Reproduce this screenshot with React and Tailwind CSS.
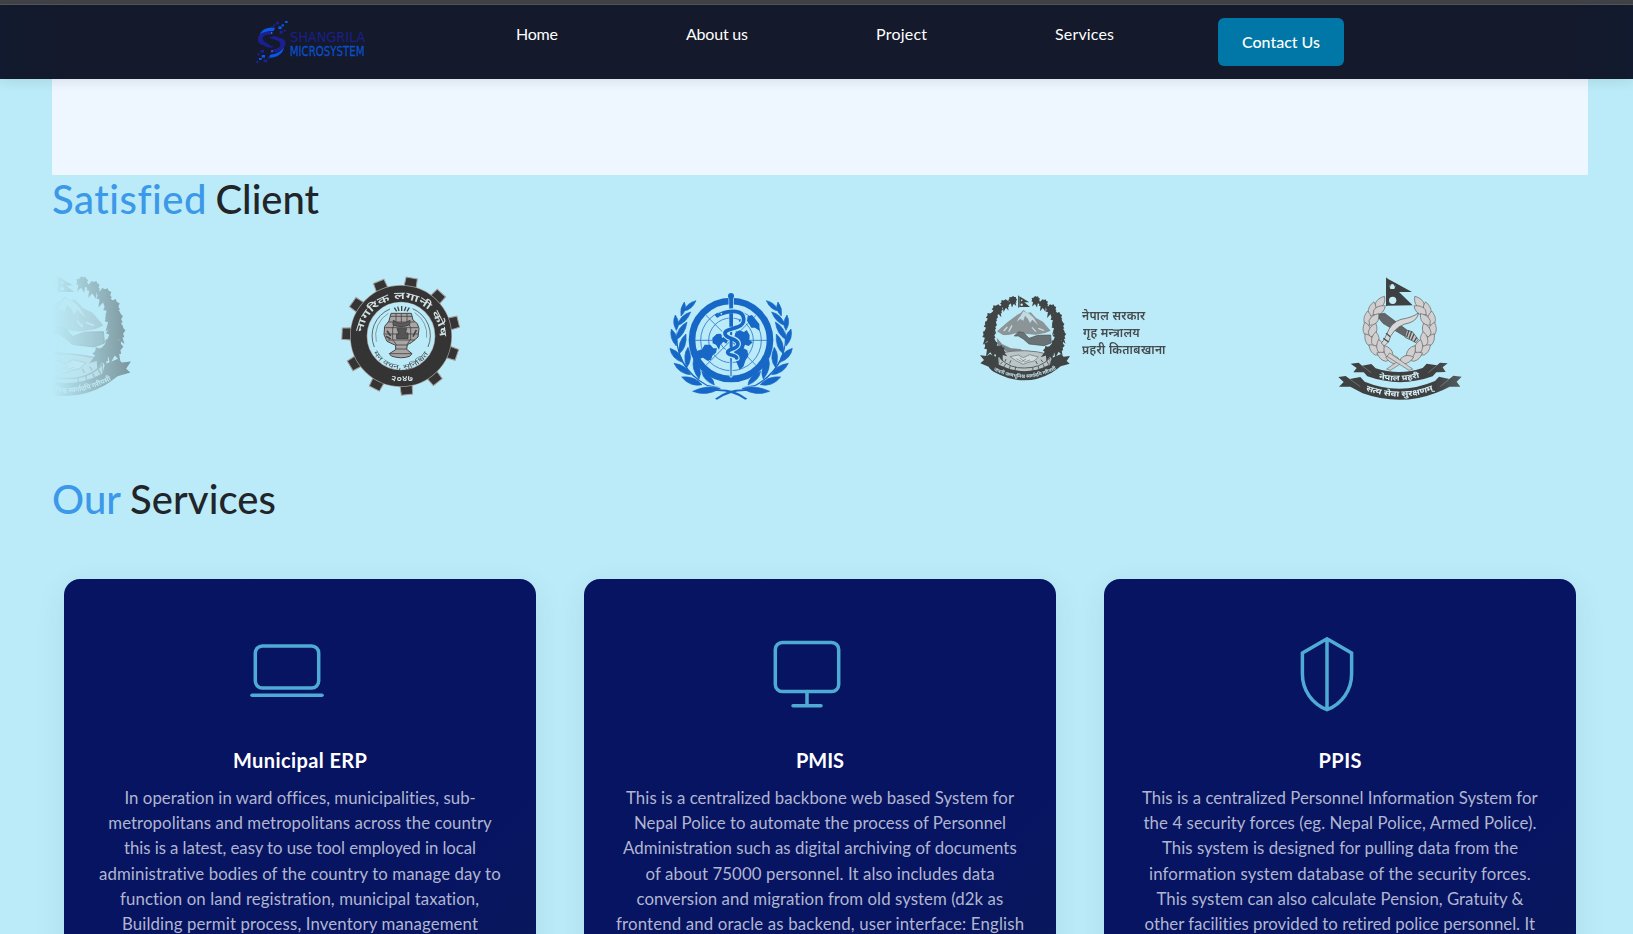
import { useLayoutEffect, useRef, useState } from "react";

/* A single line of text, tracked so that it spans the given width. */
function Line({ w, className = "", children }) {
  const ref = useRef(null);
  const [gap, setGap] = useState(0);
  useLayoutEffect(() => {
    const natural = ref.current.getBoundingClientRect().width;
    setGap((w - natural) / Math.max(1, String(children).length - 1));
  }, []);
  return (
    <span className={`block whitespace-nowrap ${className}`} style={{ width: w }}>
      <span ref={ref} className="inline-block" style={{ letterSpacing: gap }}>
        {children}
      </span>
    </span>
  );
}

const deva = "'Noto Sans Devanagari', 'Noto Sans', sans-serif";

function BrandLogo() {
  return (
    <svg className="block h-[45px] w-[112px] overflow-visible" viewBox="75 60 336 135">
      <g fill="#0a58e8">
        <path d="M88 111C90 91 108 80 135 83L131 93C112 92 98 100 88 111Z" />
        <path d="M162 141C160 161 143 173 114 174L121 164C139 162 151 156 162 141Z" />
        <rect x="145" y="79" width="10" height="8" />
        <rect x="165" y="63" width="8" height="6" />
        <rect x="155" y="73" width="7" height="6" />
        <rect x="95" y="165" width="10" height="8" />
        <rect x="87" y="174" width="8" height="6" />
      </g>
      <g fill="#1b2090">
        <path d="M84 122C81 104 99 92 128 94L122 104C106 103 96 109 98 117C101 126 112 130 124 138C108 137 86 136 84 122Z" />
        <path d="M166 126C169 145 151 157 120 159L127 149C143 147 153 141 151 132C149 122 134 120 114 112C137 111 162 110 166 126Z" />
        <path d="M96 118C102 132 116 139 133 140C118 149 96 140 96 118Z" />
        <path d="M154 130C147 119 135 113 119 112C134 104 153 112 154 130Z" />
        <rect x="138" y="65" width="9" height="8" />
        <rect x="130" y="73" width="6" height="6" />
        <rect x="149" y="92" width="9" height="9" />
        <rect x="161" y="89" width="6" height="6" />
        <rect x="122" y="79" width="8" height="5" />
        <rect x="101" y="178" width="11" height="9" />
        <rect x="92" y="150" width="10" height="8" />
        <rect x="82" y="160" width="7" height="6" />
        <rect x="78" y="183" width="7" height="6" />
        <rect x="113" y="170" width="8" height="6" />
      </g>
      <circle cx="125" cy="99" r="2.5" fill="#7d86c0" />
      <circle cx="126" cy="153" r="2.5" fill="#7d86c0" />
      <text x="180" y="126" fontFamily="'DejaVu Sans', sans-serif" fontSize="40" fill="#1b2088" textLength="226" lengthAdjust="spacingAndGlyphs">
        SHANGRILA
      </text>
      <text x="179" y="167" fontFamily="'DejaVu Sans', sans-serif" fontSize="42" fill="#0a50c8" stroke="#0a50c8" strokeWidth=".8" textLength="225" lengthAdjust="spacingAndGlyphs">
        MICROSYSTEM
      </text>
    </svg>
  );
}

function Blossom({ x, y, r = 0, s = 1 }) {
  return (
    <g transform={`translate(${x} ${y}) rotate(${r}) scale(${s})`}>
      <path d="M0-13L4-10L9-11L10-6L14-3L11 2L13 7L7 8L3 12L-2 9L-8 11L-9 5L-14 3L-11-2L-12-8L-6-8Z" />
      <path d="M-9 5L-14 19L-4 12L1 24L5 11L14 17L9 4Z" />
    </g>
  );
}

function NepalEmblem({ id, className }) {
  const right = [
    [197, 45, -8, 0.95], [220, 56, -12, 1.05], [243, 73, -12, 1.2], [259, 97, -10, 1.3],
    [264, 122, -4, 1.4], [268, 150, 4, 1.45], [262, 182, 12, 1.55], [238, 198, 18, 1.35],
  ];
  return (
    <svg className={className} viewBox="30 30 270 258">
      <path d="M81 139L112 112L142 89L152 84L160 75L172 84L182 82L198 99L219 110L242 137L210 151L150 145L112 158Z" fill="#8b9598" />
      <path d="M160 79L152 92L146 100L140 110L151 102L160 107L165 92L174 102L180 114L187 104L204 120L191 98L178 86Z" fill="#c2dbe2" />
      <path d="M112 126L101 138M126 121L116 140M205 130L222 137M186 127L198 140" stroke="#c3dbe2" strokeWidth="4" />
      <path d="M80 151L116 150L144 143L172 158L204 148L240 142L239 207L180 207L115 196L83 168Z" fill="#c0eaf5" />
      <path d="M133 153L146 140L161 143L177 160L203 151L242 150L244 174L222 182L177 177L160 162L145 153Z" fill="#697376" stroke="#4c5153" strokeWidth="2" />
      <path d="M80 158L96 177L123 190L151 192L174 207L216 210L214 219L160 213L113 202L84 184Z" fill="#7e888b" />
      <path d="M87 205Q165 187 239 209L241 239Q167 282 86 241Z" fill="#bac5c8" stroke="#747a7c" strokeWidth="3" />
      <path d="M120 215L145 210L160 218L179 209L205 216L192 228L175 232L159 238L140 228Z" fill="#d2dbdd" stroke="#697174" strokeWidth="2" />
      <path d="M139 221L155 230L168 222M149 218L164 231L180 225" fill="none" stroke="#727a7d" strokeWidth="2" />
      <g fill="none" stroke="#565e61" strokeWidth="3">
        <path d="M91 221Q121 251 163 249Q211 250 241 218" />
        <path d="M98 230L91 238M107 237L100 248M121 242L117 253M137 245L135 257M231 229L236 239M219 238L224 248M204 243L207 253M188 247L189 257M105 230L108 222M119 235L123 226M218 231L213 224M202 237L197 228" />
      </g>
      <g fill="#404445">
        {right.map(([x, y, r, s], i) => (
          <g key={i}>
            <Blossom x={x} y={y} r={r} s={s} />
            <Blossom x={325 - x} y={y} r={-r} s={s} />
          </g>
        ))}
        <path d="M148 34L178 52L163 52L180 66L148 66Z" />
        <path d="M146 32V68" stroke="#404445" strokeWidth="3" />
        <path d="M30 211L50 213L60 207L84 218L86 239Q164 278 240 239L245 219L273 207L281 215L300 213L290 228L299 236L272 244Q257 256 245 263Q164 309 77 263Q61 256 56 245L31 235L42 225Z" />
      </g>
      <circle cx="155" cy="46" r="2.5" fill="#d6edf2" />
      <circle cx="155" cy="59" r="3.5" fill="#d6edf2" />
      <path id={id} d="M71 256Q164 303 259 252" fill="none" />
      <text fontFamily={deva} fontSize="15" fontWeight="700" fill="#c5e3eb">
        <textPath href={`#${id}`} textLength="196" lengthAdjust="spacingAndGlyphs">
          जननी जन्मभूमिश्च स्वर्गादपि गरीयसी
        </textPath>
      </text>
    </svg>
  );
}

function GearSeal() {
  const teeth = Array.from({ length: 11 }, (_, i) => 10.5 + i * 32.73);
  return (
    <svg className="block h-[140px] w-[140px] shrink-0" viewBox="0 0 420 420">
      <g fill="#343434" stroke="#a49d9c" strokeWidth="3">
        {teeth.map((a) => (
          <path key={a} d="M194 80L196 36H230L232 80Z" transform={`rotate(${a} 213 213)`} />
        ))}
      </g>
      <circle cx="213" cy="213" r="127" fill="none" stroke="#a49d9c" strokeWidth="52" />
      <circle cx="213" cy="213" r="127" fill="none" stroke="#343434" strokeWidth="48" />
      <path id="seal-top" d="M98 203A116 116 0 0 1 328 203" fill="none" />
      <text fontFamily={deva} fontSize="30" fontWeight="600" fill="#d6e1e4">
        <textPath href="#seal-top" textLength="346" lengthAdjust="spacingAndGlyphs">
          नागरिक लगानी कोष
        </textPath>
      </text>
      <text x="183" y="347" fontFamily={deva} fontSize="24" fontWeight="600" fill="#d6e1e4" textLength="66" lengthAdjust="spacingAndGlyphs">
        २०४७
      </text>
      <path d="M133 246A87 87 0 0 1 180 132M248 131A88 88 0 0 1 294 246" fill="none" stroke="#4b5053" strokeWidth="2.5" />
      <path d="M139 230A78 78 0 0 1 175 145M254 143A79 79 0 0 1 290 218" fill="none" stroke="#4b5053" strokeWidth="1.5" />
      <path id="seal-bottom" d="M130 262A94 94 0 0 0 298 259" fill="none" />
      <text fontFamily={deva} fontSize="20" fill="#4b5053">
        <textPath href="#seal-bottom" textLength="200" lengthAdjust="spacingAndGlyphs">
          मन वचन, सुनिश्चित
        </textPath>
      </text>
      <g stroke="#454545" strokeWidth="3">
        <path d="M193 128L200 139M203 125L207 138M215 123V138M228 125L223 138M238 128L231 139" strokeWidth="4" />
        <path d="M183 145L244 145L249 165L262 176L267 190L264 216L244 233L232 239L230 253L246 266L239 274Q213 283 184 273L178 266L197 254V241L171 229L162 209L164 184L177 168Z" fill="#aaa5a5" />
        <path d="M181 154H247M175 171H254M166 188H264M164 207H264M173 225H255M195 240H233M196 252H231M179 266H246" fill="none" strokeWidth="2.5" />
        <path d="M198 145V168L188 188V224L199 239M231 145V169L242 188V222L231 239M214 145V187" fill="none" strokeWidth="2.5" />
        <path d="M190 166Q213 184 240 166L239 179Q215 190 189 180Z" fill="#5e5b5b" />
        <path d="M201 191H230L226 204H234V221H200V207H207Z" fill="#555" />
        <path d="M171 197L182 213M259 195L249 215M168 214L182 222" strokeWidth="5" />
      </g>
    </svg>
  );
}

function WhoSeal() {
  const leaves = [
    "M108 62Q82 68 70 93Q95 91 108 62Z",
    "M73 66Q59 84 63 108Q83 89 73 66Z",
    "M92 96Q63 103 51 137Q80 128 92 96Z",
    "M46 105Q35 128 49 151Q63 130 46 105Z",
    "M81 126Q50 143 48 180Q76 163 81 126Z",
    "M34 147Q27 174 49 198Q59 170 34 147Z",
    "M78 162Q53 183 57 222Q82 202 78 162Z",
    "M30 205Q34 235 67 247Q64 216 30 205Z",
    "M84 202Q67 226 80 263Q101 237 84 202Z",
    "M42 250Q57 282 92 284Q79 255 42 250Z",
    "M101 237Q93 267 117 297Q131 267 101 237Z",
    "M65 291Q91 322 126 314Q103 287 65 291Z",
    "M125 274Q130 302 163 315Q160 287 125 274Z",
    "M98 334Q139 351 181 325Q139 314 98 334Z",
  ];
  const side = (
    <g>
      {leaves.map((d) => (
        <path key={d} d={d} stroke="#1768c6" strokeWidth="2" />
      ))}
      <path d="M165 356Q207 323 270 329L260 333Q213 331 171 359Z" />
      <path d="M50 147Q47 262 142 315L179 321L142 319Q38 263 50 147Z" />
    </g>
  );
  return (
    <svg className="block h-[130px] w-[140px] shrink-0" viewBox="0 0 420 390">
      <g fill="#1768c6">
        {side}
        <g transform="translate(427 0) scale(-1 1)">{side}</g>
      </g>
      <g fill="none" stroke="#2876cc" strokeWidth="2.5">
        <circle cx="213" cy="181" r="32" />
        <circle cx="213" cy="181" r="67" />
        <circle cx="213" cy="181" r="91" />
        <path d="M105 181H322M137 105L289 257M289 105L137 257" />
      </g>
      <g fill="#1768c6">
        <path d="M110 213L126 208L134 194L151 194L160 205L171 205L168 218L158 226L153 239L142 242L129 233L119 236L108 223Z" />
        <path d="M157 174L170 162L182 161L187 174L194 169L203 184L199 191L190 185L181 195L177 209L168 194L158 190Z" />
        <path d="M226 158L238 151L252 156L260 150L269 166L268 180L278 187L266 198L255 194L251 205L262 211L265 228L257 240L250 260L239 269L229 246L231 229L222 217L227 202L219 188Z" />
        <path d="M263 109L276 105L298 132L299 153L285 143L274 143L261 122Z" />
        <path d="M164 105Q180 91 203 97Q196 108 171 113Z" />
        <path d="M236 121L250 112L258 123L252 136L243 133Z" />
      </g>
      <circle cx="213" cy="180" r="117" fill="none" stroke="#1768c6" strokeWidth="20" />
      <path d="M207 52L210 291H216L220 52Z" fill="#1768c6" stroke="#bbeaf7" strokeWidth="3" />
      <path d="M208 50H219V88H208Z" fill="#1768c6" />
      <circle cx="213" cy="48" r="9" fill="#1768c6" />
      <g fill="none" strokeLinecap="round">
        <path d="M183 102Q208 91 229 95C257 99 259 133 233 141C212 148 193 150 195 161C197 177 234 174 234 192C234 208 203 206 203 217C204 228 229 224 230 234" stroke="#bbeaf7" strokeWidth="18" />
        <path d="M179 103Q208 91 229 95C257 99 259 133 233 141C212 148 193 150 195 161C197 177 234 174 234 192C234 208 203 206 203 217C204 228 229 224 230 234" stroke="#1768c6" strokeWidth="11" />
      </g>
      <path d="M208 100H219V140H208ZM209 178H218V203H209Z" fill="#1768c6" />
      <circle cx="184" cy="101" r="2.5" fill="#bbeaf7" />
    </svg>
  );
}

function PoliceCrest() {
  const leaves = [
    [151, 97, 35], [127, 117, 12], [148, 120, 55], [113, 145, 0], [133, 148, 38],
    [110, 178, -14], [129, 180, 22], [117, 210, -32], [136, 207, 5], [133, 239, -48],
    [151, 230, -14], [160, 259, -62], [174, 246, -30], [188, 268, -72],
  ];
  const branch = (
    <g>
      {leaves.map(([x, y, r]) => (
        <path key={`${x}-${y}`} d="M0-22Q17-5 9 14L0 23L-10 13Q-15-5 0-22Z" transform={`translate(${x} ${y}) rotate(${r})`} />
      ))}
      <path d="M170 297L239 249L247 259L181 301Z" />
    </g>
  );
  return (
    <svg className="block h-[140px] w-[140px] shrink-0" viewBox="0 0 420 420">
      <g fill="#d1cfcf" stroke="#6a6b6c" strokeWidth="2">
        {branch}
        <g transform="translate(418 0) scale(-1 1)">{branch}</g>
      </g>
      <path d="M169 24L246 66L207 66L248 106L168 107Z" fill="#3c4042" />
      <path d="M170 23V108" stroke="#3c4042" strokeWidth="3" />
      <path d="M178 46Q187 58 197 46L193 57H181Z" fill="#c7edf6" />
      <circle cx="187" cy="48" r="6" fill="#c7edf6" />
      <circle cx="188" cy="91" r="11" fill="#c7edf6" />
      <g stroke="#4c4e50" strokeWidth="2">
        <path d="M148 132L164 130L236 184L226 200L159 160L147 145Z" fill="#626668" />
        <path d="M230 181L247 185L265 209L258 218L244 211L225 202Z" fill="#c3c5c6" />
        <path d="M237 181L230 202M245 184L237 206M252 192L244 211M260 202L252 216" strokeWidth="4" />
        <path d="M265 129Q264 148 240 158Q202 164 182 198L176 215L163 228L154 219L162 209L170 193Q183 157 213 148Q247 143 265 129Z" fill="#d9d8d8" />
        <path d="M160 205L176 216M168 190L181 200" strokeWidth="4" />
      </g>
      <g fill="#3e4042">
        <path d="M62 281L86 278L96 287L124 282L137 295Q209 318 278 294L290 281L321 286L330 278L353 280L338 292L347 306L319 307L308 319Q211 354 112 319L101 307L70 307L80 294Z" />
        <path d="M25 321L47 318L59 327L91 321L104 335Q210 378 315 333L327 320L358 327L370 317L395 320L380 335L391 350L359 350Q338 361 319 368Q211 410 98 370L61 350L27 350L41 336Z" />
      </g>
      <path d="M96 287L123 308M321 286L295 308M59 327L91 350M358 327L331 350" stroke="#85898b" strokeWidth="2" />
      <path id="crest-upper" d="M146 326Q210 340 273 321" fill="none" />
      <path id="crest-lower" d="M107 361Q211 399 311 360" fill="none" />
      <g fontFamily={deva} fontWeight="700" fill="#d8f0f6">
        <text fontSize="23">
          <textPath href="#crest-upper" textLength="124" lengthAdjust="spacingAndGlyphs">नेपाल प्रहरी</textPath>
        </text>
        <text fontSize="24">
          <textPath href="#crest-lower" textLength="208" lengthAdjust="spacingAndGlyphs">सत्य सेवा सुरक्षणम्</textPath>
        </text>
      </g>
    </svg>
  );
}

const iconProps = {
  className: "block h-[80px] w-[80px]",
  viewBox: "0 0 80 80",
  fill: "none",
  stroke: "#4fabd6",
  strokeWidth: 3.5,
  strokeLinecap: "round",
};

const LaptopIcon = () => (
  <svg {...iconProps}>
    <rect x="8.3" y="9" width="63.4" height="42" rx="7" />
    <path d="M5 58.2H75" />
  </svg>
);
const MonitorIcon = () => (
  <svg {...iconProps}>
    <rect x="8.3" y="5.5" width="63.4" height="49" rx="7" />
    <path d="M40 54.5V68.7M26 68.7H54" />
  </svg>
);
const ShieldIcon = () => (
  <svg {...iconProps}>
    <path d="M40 1.8L64.6 16V37C64.6 53 55 67 40 72.7C25 67 15.4 53 15.4 37V16Z M40 1.8V72.7" />
  </svg>
);

const services = [
  {
    Icon: LaptopIcon,
    title: ["Municipal ERP", 134],
    lines: [
      ["In operation in ward offices, municipalities, sub-", 351],
      ["metropolitans and metropolitans across the country", 383.5],
      ["this is a latest, easy to use tool employed in local", 352],
      ["administrative bodies of the country to manage day to", 402],
      ["function on land registration, municipal taxation,", 360],
      ["Building permit process, Inventory management", 356],
    ],
  },
  {
    Icon: MonitorIcon,
    title: ["PMIS", 48],
    lines: [
      ["This is a centralized backbone web based System for", 388],
      ["Nepal Police to automate the process of Personnel", 372],
      ["Administration such as digital archiving of documents", 394],
      ["of about 75000 personnel. It also includes data", 349],
      ["conversion and migration from old system (d2k as", 367],
      ["frontend and oracle as backend, user interface: English", 408],
    ],
  },
  {
    Icon: ShieldIcon,
    title: ["PPIS", 43],
    lines: [
      ["This is a centralized Personnel Information System for", 396],
      ["the 4 security forces (eg. Nepal Police, Armed Police).", 393],
      ["This system is designed for pulling data from the", 356],
      ["information system database of the security forces.", 382],
      ["This system can also calculate Pension, Gratuity &", 367],
      ["other facilities provided to retired police personnel. It", 391],
    ],
  },
];

function ServiceCard({ Icon, title, lines }) {
  return (
    <article className="flex h-[520px] w-[472px] flex-col items-center rounded-2xl bg-linear-to-br from-[#071462] from-70% to-[#0b1a54] pt-[58px] shadow-[0_8px_32px_rgba(0,40,60,0.07)]">
      <div className="mr-[26px]">
        <Icon />
      </div>
      <h3 className="mt-[31px] text-[20px] leading-6 font-bold text-white">
        <Line w={title[1]}>{title[0]}</Line>
      </h3>
      <div className="mt-[13px] flex flex-col items-center text-[16.8px] leading-[25.2px] text-[#b1b6d0]">
        {lines.map(([text, w]) => (
          <Line key={text} w={w}>
            {text}
          </Line>
        ))}
      </div>
    </article>
  );
}

function SectionTitle({ accent, rest }) {
  return (
    <h2 className="flex gap-[9px] text-[40px] leading-[48px] font-medium text-[#212529]">
      <Line w={accent[1]} className="text-[#3c98e8]">
        {accent[0]}
      </Line>
      <Line w={rest[1]}>{rest[0]}</Line>
    </h2>
  );
}

export default function App() {
  return (
    <div className="flex h-[934px] w-full flex-col overflow-hidden bg-[#bbebf8] font-['Lato',sans-serif]">
      <div className="h-[5px] shrink-0 border-b border-[#565656] bg-[#424346]" />
      <header className="z-10 flex h-[74px] shrink-0 items-start bg-[linear-gradient(to_right,#111a2e,#14192c_4%,#14192c_96%,#111a2e)] pl-[255px] text-white shadow-[0_2px_12px_rgba(0,0,0,0.1)]">
        <div className="mt-[15px] w-[261px]">
          <BrandLogo />
        </div>
        <nav className="mt-[17px] flex w-[702px] text-[16px] leading-6">
          <a className="w-[170px]"><Line w={42}>Home</Line></a>
          <a className="w-[190px]"><Line w={62}>About us</Line></a>
          <a className="w-[179px]"><Line w={51}>Project</Line></a>
          <a><Line w={59}>Services</Line></a>
        </nav>
        <button className="mt-[13px] flex h-12 w-[126px] items-center justify-center rounded-md bg-[#0077a6] text-[16px] font-medium">
          <Line w={78}>Contact Us</Line>
        </button>
      </header>

      <main className="flex flex-col pl-[52px]">
        <div className="h-[96px] w-[1536px] bg-[#eef6ff]" />

        <section className="h-[300px]">
          <SectionTitle accent={["Satisfied", 154.5]} rest={["Client", 103.5]} />
          <div className="mt-[42px] h-[140px] w-[1536px] overflow-hidden mask-[linear-gradient(to_right,transparent,black_10%,black_90%,transparent)]">
            <div className="-ml-[49px] flex h-[140px] w-max items-start">
              <NepalEmblem id="motto-a" className="mt-[10px] block h-[122px] w-[128px] shrink-0" />
              <div className="ml-[199px]">
                <GearSeal />
              </div>
              <div className="mt-[15px] ml-[190px]">
                <WhoSeal />
              </div>
              <div className="ml-[180px] flex w-[210px] gap-[12px] pt-[30px]">
                <NepalEmblem id="motto-b" className="block h-[86px] w-[90px] shrink-0" />
                <div className="mt-[14px] font-['Noto_Sans_Devanagari','Noto_Sans',sans-serif] text-[12px] leading-[17px] font-semibold text-[#444a4d]">
                  <Line w={64}>नेपाल सरकार</Line>
                  <Line w={58} className="ml-px">गृह मन्त्रालय</Line>
                  <Line w={86}>प्रहरी किताबखाना</Line>
                </div>
              </div>
              <div className="mt-[5px] ml-[140px]">
                <PoliceCrest />
              </div>
            </div>
          </div>
        </section>

        <section>
          <SectionTitle accent={["Our", 69]} rest={["Services", 146]} />
          <div className="mt-[56px] ml-[12px] flex gap-[48px]">
            {services.map((s) => (
              <ServiceCard key={s.title[0]} {...s} />
            ))}
          </div>
        </section>
      </main>
    </div>
  );
}
